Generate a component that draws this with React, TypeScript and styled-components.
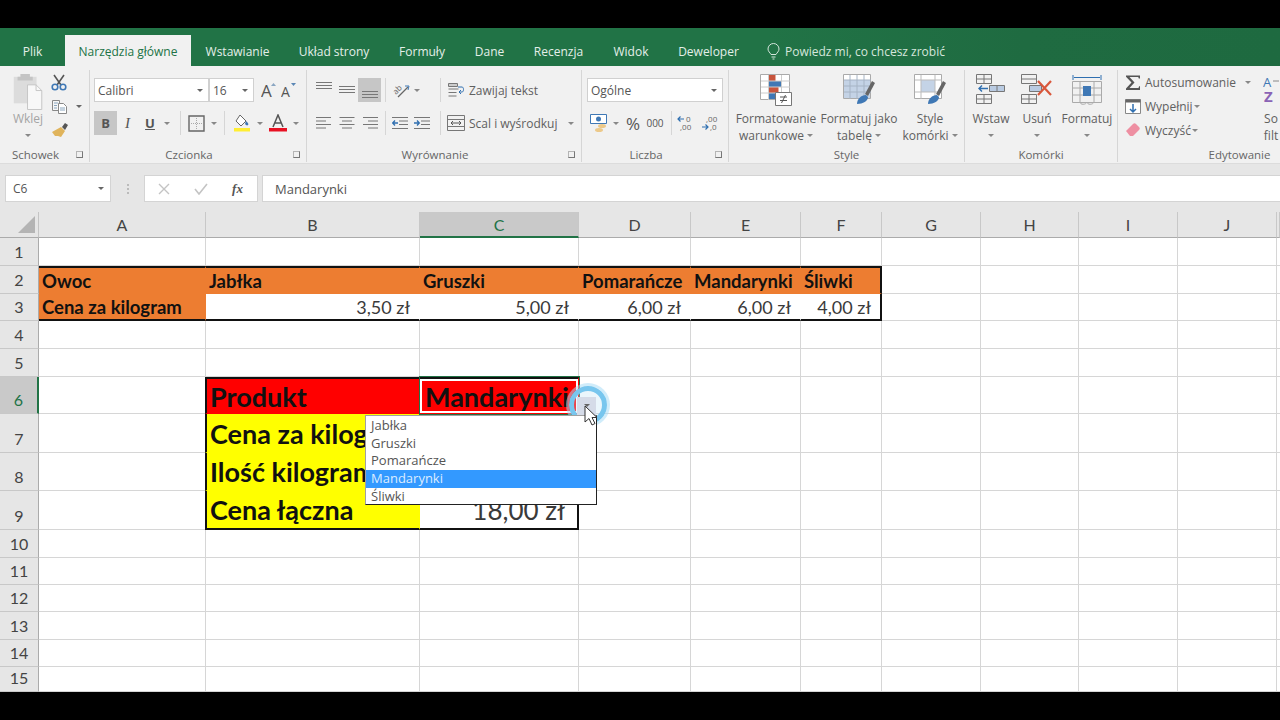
import React from 'react'
import styled, { createGlobalStyle } from 'styled-components'

const GlobalStyle = createGlobalStyle`
  html, body { margin: 0; padding: 0; background: #000; }
  body { font-family: "Open Sans", "Liberation Sans", sans-serif; }
`

const Page = styled.div`
  width: 1280px;
  height: 720px;
  background: #000;
  overflow: hidden;
  display: flex;
  flex-direction: column;
`
const BlackBar = styled.div<{ $h: number }>`
  height: ${p => p.$h}px;
  flex: none;
  background: #000;
`

/* tabs */
const TabBar = styled.div`
  height: 38px;
  flex: none;
  background: linear-gradient(90deg, #217346 0%, #217346 60%, #1f6b41 80%, #1e6a40 100%);
  display: flex;
  align-items: flex-end;
  color: #e4efe9;
  font-size: 12px;
`
const Tab = styled.div<{ $w: number; $active?: boolean }>`
  width: ${p => p.$w}px;
  height: 31px;
  display: flex;
  align-items: center;
  justify-content: center;
  padding-top: 1px;
  box-sizing: border-box;
  background: ${p => (p.$active ? '#f1f1f1' : 'transparent')};
  color: ${p => (p.$active ? '#217346' : 'inherit')};
`
const TellMe = styled.div`
  height: 31px;
  padding: 1px 0 0 14px;
  box-sizing: border-box;
  display: flex;
  align-items: center;
  gap: 5px;
  color: #d5e6dc;
  font-size: 12px;
`

/* ribbon */
const Ribbon = styled.div`
  height: 98px;
  flex: none;
  background: #f1f1f1;
  display: flex;
  overflow: hidden;
  color: #606060;
  font-size: 12px;
  border-bottom: 1px solid #dcdcdc;
  box-sizing: border-box;
`
const Group = styled.div<{ $w: number; $last?: boolean }>`
  width: ${p => p.$w}px;
  flex: none;
  height: 92px;
  margin-top: 4px;
  box-sizing: border-box;
  border-right: ${p => (p.$last ? 'none' : '1px solid #d6d6d6')};
  display: flex;
  flex-direction: column;
`
const GroupBody = styled.div`
  height: 74px;
  flex: none;
  display: flex;
`
const RowStack = styled.div<{ $left?: number }>`
  display: flex;
  flex-direction: column;
  gap: 9px;
  padding: 8px 0 0 ${p => p.$left ?? 0}px;
`
const ToolRow = styled.div`
  height: 24px;
  display: flex;
  align-items: center;
`
const GroupFoot = styled.div`
  flex: 1;
  display: flex;
  align-items: center;
  padding-top: 3px;
  color: #666;
  font-size: 11.5px;
`
const FootLabel = styled.div`
  flex: 1;
  text-align: center;
`
const Launcher = styled.div`
  width: 7px;
  height: 7px;
  margin: 0 6px 0 5px;
  border-right: 1px solid #777;
  border-bottom: 1px solid #777;
  border-left: 1px solid #b5b5b5;
  border-top: 1px solid #b5b5b5;
  box-sizing: border-box;
`
const Slot = styled.div<{ $w: number; $ml?: number; $active?: boolean }>`
  width: ${p => p.$w}px;
  margin-left: ${p => p.$ml ?? 0}px;
  height: 24px;
  flex: none;
  display: flex;
  align-items: center;
  justify-content: center;
  background: ${p => (p.$active ? '#c6c6c6' : 'transparent')};
`
const Caret = styled.span<{ $dark?: boolean }>`
  display: inline-block;
  width: 0;
  height: 0;
  border-left: 3px solid transparent;
  border-right: 3px solid transparent;
  border-top: 3px solid ${p => (p.$dark ? '#666' : '#888')};
`
const Sep = styled.div<{ $ml: number }>`
  width: 1px;
  height: 24px;
  flex: none;
  margin-left: ${p => p.$ml}px;
  background: #d6d6d6;
`
const Combo = styled.div<{ $w: number; $ml?: number }>`
  width: ${p => p.$w}px;
  margin-left: ${p => p.$ml ?? 0}px;
  height: 24px;
  flex: none;
  box-sizing: border-box;
  background: #fff;
  border: 1px solid #d0d0d0;
  display: flex;
  align-items: center;
  justify-content: space-between;
  padding: 0 5px 0 3px;
  color: #555;
  font-size: 12px;
`
const GlyphText = styled.span<{ $serif?: boolean; $bold?: boolean; $under?: boolean; $size?: number }>`
  font-family: ${p => (p.$serif ? '"Liberation Serif", serif' : '"Open Sans", sans-serif')};
  font-weight: ${p => (p.$bold ? 700 : 400)};
  font-style: ${p => (p.$serif ? 'italic' : 'normal')};
  font-size: ${p => p.$size ?? 13}px;
  color: #555;
  text-decoration: ${p => (p.$under ? 'underline' : 'none')};
`
const ToolLabel = styled.span<{ $ml?: number }>`
  margin-left: ${p => p.$ml ?? 4}px;
  white-space: nowrap;
`
const BigButton = styled.div<{ $w: number }>`
  width: ${p => p.$w}px;
  flex: none;
  display: flex;
  flex-direction: column;
  align-items: center;
  text-align: center;
  white-space: nowrap;
  line-height: 17px;
`
const BigIcon = styled.div`
  height: 41px;
  padding-top: 4px;
  box-sizing: border-box;
  display: flex;
  align-items: flex-start;
  justify-content: center;
`
const LabelLine = styled.div`
  display: flex;
  align-items: center;
  justify-content: center;
  gap: 3px;
  height: 18px;
`
const ClipColumn = styled.div`
  width: 38px;
  margin-left: 9px;
  display: flex;
  flex-direction: column;
  align-items: center;
  padding-top: 3px;
  color: #a4a4a4;
  line-height: 16px;
`
const ClipTools = styled.div`
  display: flex;
  flex-direction: column;
  gap: 6px;
  margin-left: 4px;
  padding-top: 3px;
`
const ClipTool = styled.div`
  height: 18px;
  display: flex;
  align-items: center;
  gap: 8px;
`
const EditColumn = styled.div`
  width: 136px;
  margin-left: 7px;
  display: flex;
  flex-direction: column;
  gap: 6px;
  padding-top: 3px;
`
const EditRow = styled.div`
  height: 18px;
  display: flex;
  align-items: center;
  white-space: nowrap;
`

/* formula bar */
const FormulaBar = styled.div`
  height: 48px;
  flex: none;
  box-sizing: border-box;
  background: #e6e6e6;
  padding-top: 11px;
`
const FormulaRow = styled.div`
  height: 27px;
  display: flex;
  color: #555;
  font-size: 12px;
`
const NameBox = styled.div`
  width: 106px;
  margin-left: 5px;
  box-sizing: border-box;
  background: #fff;
  border: 1px solid #d4d4d4;
  display: flex;
  align-items: center;
  justify-content: space-between;
  padding: 0 6px 0 7px;
`
const Dots = styled.div`
  width: 33px;
  display: flex;
  flex-direction: column;
  align-items: center;
  justify-content: center;
  gap: 2px;
  & > i { width: 2px; height: 2px; background: #bbb; }
`
const FxBox = styled.div`
  width: 114px;
  box-sizing: border-box;
  background: #fff;
  border: 1px solid #d4d4d4;
  display: grid;
  grid-template-columns: repeat(3, 37px);
  align-items: center;
  justify-items: center;
`
const FormulaInput = styled.div`
  flex: 1;
  margin-left: 4px;
  box-sizing: border-box;
  background: #fff;
  border: 1px solid #d4d4d4;
  border-right: none;
  display: flex;
  align-items: center;
  padding-left: 12px;
  font-size: 13px;
`

/* sheet */
const colWidths = [167, 214, 159, 112, 110, 81, 99, 98, 99, 99, 3]
const colNames = ['A', 'B', 'C', 'D', 'E', 'F', 'G', 'H', 'I', 'J', '']
const rowHeights = [28, 28, 27, 28, 28, 37, 39, 38, 39, 28, 27, 27, 28, 27, 25]

const Sheet = styled.div`
  display: grid;
  grid-template-columns: 39px ${colWidths.map(w => `${w}px`).join(' ')};
  grid-template-rows: 26px ${rowHeights.map(h => `${h}px`).join(' ')};
  background: #fff;
  flex: none;
  font-family: Lato, "Liberation Sans", sans-serif;
`
const Corner = styled.div`
  background: #e6e6e6;
  border-right: 1px solid #c4c4c4;
  border-bottom: 1px solid #ababab;
  box-sizing: border-box;
  display: flex;
  align-items: flex-end;
  justify-content: flex-end;
  padding: 0 3px 4px 0;
`
const ColHead = styled.div<{ $on?: boolean }>`
  background: ${p => (p.$on ? '#c9c9c9' : '#e6e6e6')};
  color: ${p => (p.$on ? '#217346' : '#444')};
  border-right: 1px solid #c8c8c8;
  border-bottom: ${p => (p.$on ? '2px solid #217346' : '1px solid #ababab')};
  box-sizing: border-box;
  display: flex;
  align-items: center;
  justify-content: center;
  font-size: 16px;
`
const RowHead = styled.div<{ $on?: boolean }>`
  background: ${p => (p.$on ? '#c9c9c9' : '#e6e6e6')};
  color: ${p => (p.$on ? '#217346' : '#444')};
  border-right: ${p => (p.$on ? '2px solid #217346' : '1px solid #ababab')};
  border-bottom: 1px solid #c8c8c8;
  box-sizing: border-box;
  display: flex;
  align-items: flex-end;
  justify-content: center;
  padding-bottom: 3px;
  line-height: 20px;
  font-size: 16px;
`

type CellSpec = {
  text?: string
  fill?: string
  bold?: boolean
  size?: number
  right?: number
  edges?: string
}

const Cell = styled.div<{ $fill?: string; $bold?: boolean; $size?: number; $right?: number; $edges?: string }>`
  position: relative;
  box-sizing: border-box;
  background: ${p => p.$fill ?? '#fff'};
  border-right: ${p => (p.$edges?.includes('r') ? '2px solid #111' : `1px solid ${p.$fill ?? '#d6d6d6'}`)};
  border-bottom: ${p => (p.$edges?.includes('b') ? '2px solid #111' : `1px solid ${p.$fill ?? '#d6d6d6'}`)};
  border-top: ${p => (p.$edges?.includes('t') ? '2px solid #111' : 'none')};
  border-left: ${p => (p.$edges?.includes('l') ? '2px solid #111' : 'none')};
  margin-left: ${p => (p.$edges?.includes('l') ? '-1px' : '0')};
  display: flex;
  align-items: center;
  justify-content: ${p => (p.$right ? 'flex-end' : 'flex-start')};
  padding: ${p => (p.$right ? `0 ${p.$right}px 0 0` : '0 0 0 3px')};
  white-space: nowrap;
  font-weight: ${p => (p.$bold ? 700 : 400)};
  font-size: ${p => p.$size ?? 18.5}px;
  color: ${p => (p.$bold ? '#111' : '#3a3a3a')};
`
const SelectedCell = styled(Cell)`
  z-index: 5;
  outline: 1px solid #217346;
  box-shadow: inset 0 0 0 2px #fff;
  padding-left: 5px;
`
const RingMark = styled.div`
  position: absolute;
  left: 149px;
  top: 7px;
  width: 28px;
  height: 28px;
  border-radius: 50%;
  border: 5px solid #78c6ee;
  box-shadow: 0 0 0 3px rgba(170, 220, 245, 0.55);
  background: rgba(190, 225, 245, 0.3);
  filter: blur(0.6px);
`
const DropButton = styled.div`
  position: absolute;
  left: 157px;
  top: 18px;
  width: 19px;
  height: 18px;
  background: #d5dbe8;
  display: flex;
  align-items: center;
  justify-content: center;
  padding-bottom: 2px;
  box-sizing: border-box;
`
const Pointer = styled.svg`
  position: absolute;
  left: 164px;
  top: 26px;
`
const Popup = styled.div`
  position: absolute;
  left: -55px;
  top: 36px;
  width: 232px;
  height: 90px;
  box-sizing: border-box;
  background: #fff;
  border: 1px solid #a0a0a0;
  border-right-color: #222;
  border-bottom-color: #222;
  font-family: "Open Sans", sans-serif;
  font-size: 13px;
  font-weight: 400;
  color: #555;
`
const PopupList = styled.div`
  margin-top: 1px;
`
const PopupItem = styled.div<{ $on?: boolean }>`
  height: 17.7px;
  line-height: 17.7px;
  padding-left: 5px;
  background: ${p => (p.$on ? '#3399ff' : 'transparent')};
  color: ${p => (p.$on ? '#dcecff' : 'inherit')};
`

const orange = '#ed7d31'
const cells: Record<string, CellSpec> = {
  A2: { text: 'Owoc', fill: orange, bold: true, edges: 't' },
  B2: { text: 'Jabłka', fill: orange, bold: true, edges: 't' },
  C2: { text: 'Gruszki', fill: orange, bold: true, edges: 't' },
  D2: { text: 'Pomarańcze', fill: orange, bold: true, edges: 't' },
  E2: { text: 'Mandarynki', fill: orange, bold: true, edges: 't' },
  F2: { text: 'Śliwki', fill: orange, bold: true, edges: 'tr' },
  A3: { text: 'Cena za kilogram', fill: orange, bold: true, edges: 'b' },
  B3: { text: '3,50 zł', fill: '#fff', right: 9, size: 18, edges: 'b' },
  C3: { text: '5,00 zł', fill: '#fff', right: 9, size: 18, edges: 'b' },
  D3: { text: '6,00 zł', fill: '#fff', right: 9, size: 18, edges: 'b' },
  E3: { text: '6,00 zł', fill: '#fff', right: 9, size: 18, edges: 'b' },
  F3: { text: '4,00 zł', fill: '#fff', right: 9, size: 18, edges: 'br' },
  B6: { text: 'Produkt', fill: '#ff0000', bold: true, size: 27, edges: 'tl' },
  B7: { text: 'Cena za kilogram', fill: '#ffff00', bold: true, size: 27, edges: 'l' },
  B8: { text: 'Ilość kilogramów', fill: '#ffff00', bold: true, size: 27, edges: 'l' },
  B9: { text: 'Cena łączna', fill: '#ffff00', bold: true, size: 27, edges: 'lb' },
  C7: { fill: '#fff', edges: 'r' },
  C8: { fill: '#fff', edges: 'r' },
  C9: { text: '18,00 zł', fill: '#fff', size: 26, right: 12, edges: 'rb' },
}

const popupItems = ['Jabłka', 'Gruszki', 'Pomarańcze', 'Mandarynki', 'Śliwki']

/* icons */
const Scissors = () => (
  <svg width="16" height="17" viewBox="0 0 16 17" fill="none">
    <path d="M3 1l7 10M13 1L6 11" stroke="#555" strokeWidth="1.6" />
    <circle cx="4" cy="13" r="2.8" stroke="#3f78b5" strokeWidth="1.6" />
    <circle cx="12" cy="13" r="2.8" stroke="#3f78b5" strokeWidth="1.6" />
  </svg>
)
const CopyIcon = () => (
  <svg width="17" height="15" viewBox="0 0 17 15" fill="none" stroke="#888">
    <path d="M1.5 1.5h7v10h-7z" fill="#f6f6f6" />
    <path d="M7.5 4.5h5l3 3v7h-8z" fill="#fff" />
    <path d="M3 4h4M3 6.5h3M3 9h3M9 9h5M9 11h5" stroke="#8aa6bf" />
  </svg>
)
const Painter = () => (
  <svg width="18" height="16" viewBox="0 0 18 16">
    <path d="M11 5l3-4 3 2-3 5z" fill="#555" />
    <path d="M1 10l9-5 4 4-4 6-3-1-3 0z" fill="#e0b45c" />
  </svg>
)
const PasteIcon = () => (
  <svg width="32" height="40" viewBox="0 0 32 40">
    <path d="M1 4h24v28H1z" fill="#dcdcdc" />
    <path d="M8 1h10v3h3v4H5V4h3z" fill="#c4c4c4" />
    <path d="M15.5 12.5h9l6 6v20h-15z" fill="#f8f8f8" stroke="#c4c4c4" />
    <path d="M24.5 12.5v6h6" fill="none" stroke="#c4c4c4" />
  </svg>
)
const GrowFont = ({ up }: { up: boolean }) => (
  <svg width="20" height="20" viewBox="0 0 20 20">
    <text x="0" y="17" fontFamily="Open Sans" fontSize={up ? 17 : 14} fill="#555">A</text>
    <path d={up ? 'M10 6l2.500-3 2.500 3z' : 'M10 3h5l-2.500 3z'} fill={up ? '#8aa6c2' : '#5b87b5'} />
  </svg>
)
const BorderIcon = () => (
  <svg width="17" height="17" viewBox="0 0 17 17" fill="none">
    <path d="M1 1h15v15H1z" stroke="#666" strokeWidth="1.4" />
    <path d="M8.500 3v11M3 8.500h11" stroke="#aaa" strokeDasharray="1 1" />
  </svg>
)
const FillIcon = () => (
  <svg width="18" height="18" viewBox="0 0 18 18">
    <path d="M7 1l6 6-5 5-5-5z" fill="#fff" stroke="#666" />
    <path d="M13 7c2 2 3 3 2 4s-2 0-3-1z" fill="#3f78b5" />
    <path d="M1 14h16v3.5H1z" fill="#ffee33" />
  </svg>
)
const FontColor = () => (
  <svg width="18" height="18" viewBox="0 0 18 18">
    <path d="M4 13L9 1l5 12M6 9h6" fill="none" stroke="#555" strokeWidth="1.5" />
    <path d="M0 14h18v3.5H0z" fill="#e81123" />
  </svg>
)
const AlignLines = ({ kind }: { kind: string }) => {
  const ys = kind === 'top' ? [2, 5, 8] : kind === 'mid' ? [6, 9, 12] : [11, 14, 17]
  if (kind === 'left' || kind === 'center' || kind === 'right') {
    const w = [15, 10, 15, 10]
    return (
      <svg width="16" height="14" viewBox="0 0 16 14" stroke="#777">
        {w.map((l, i) => {
          const x = kind === 'left' ? 0 : kind === 'center' ? (16 - l) / 2 : 16 - l
          return <path key={i} d={`M${x} ${1.5 + i * 3.5}h${l}`} />
        })}
      </svg>
    )
  }
  return (
    <svg width="16" height="18" viewBox="0 0 16 18" stroke="#777">
      {ys.map(y => <path key={y} d={`M0 ${y - 0.5}h16`} />)}
    </svg>
  )
}
const Orient = () => (
  <svg width="17" height="17" viewBox="0 0 17 17" fill="none">
    <text x="0" y="10" fontFamily="Open Sans" fontSize="8" fill="#666" transform="rotate(-45 5 8)">ab</text>
    <path d="M5 15L15 5" stroke="#666" strokeWidth="1.200" />
    <path d="M12 4l4 0-1 4" stroke="#3f78b5" />
  </svg>
)
const Indent = ({ dir }: { dir: 'in' | 'out' }) => (
  <svg width="16" height="14" viewBox="0 0 16 14" fill="none">
    <path d="M0 1.5h16M7 5h9M7 8.5h9M0 12.5h16" stroke="#777" />
    <path d={dir === 'out' ? 'M6 7H1m2-2.5L.7 7 3 9.5' : 'M0 7h5M3 4.5L5.3 7 3 9.5'} stroke="#2f6fb0" strokeWidth="1.3" />
  </svg>
)
const WrapIcon = () => (
  <svg width="18" height="17" viewBox="0 0 18 17" fill="none" stroke="#777">
    <path d="M1.5 1.5h9v3h-9z" fill="#ccc" />
    <path d="M1.5 7h10M1.5 10.5h8M1.5 14h8" />
    <path d="M11 5h4c2 0 2 5 0 5h-3m2-2l-2 2 2 2" stroke="#2f6fb0" />
  </svg>
)
const MergeIcon = () => (
  <svg width="18" height="18" viewBox="0 0 18 18" fill="none" stroke="#777">
    <path d="M.5 1.5h17v15H.5zM.5 5.5h17M.5 12.5h17" />
    <path d="M4 9h10M6 7L4 9l2 2M12 7l2 2-2 2" stroke="#555" />
  </svg>
)
const Currency = () => (
  <svg width="19" height="19" viewBox="0 0 19 19">
    <path d="M.5.5h16v9H.5z" fill="#fff" stroke="#3f78b5" />
    <circle cx="8.500" cy="5" r="2.500" fill="#3f78b5" />
    <ellipse cx="12" cy="12" rx="4" ry="2" fill="#ecc98a" />
    <ellipse cx="9" cy="16" rx="4" ry="2" fill="#ecc98a" />
  </svg>
)
const DecimalIcon = ({ more }: { more: boolean }) => (
  <svg width="18" height="17" viewBox="0 0 18 17">
    <path d={more ? 'M1 4h6M3.500 1.500L1 4l2.500 2.500' : 'M1 12h6M4.500 9.500L7 12l-2.500 2.500'} fill="none" stroke="#2f6fb0" strokeWidth="1.200" />
    <text x={more ? 9 : 5} y="7" fontFamily="Open Sans" fontSize="8" fill="#666">{more ? '0' : ',00'}</text>
    <text x={more ? 3 : 9} y="15" fontFamily="Open Sans" fontSize="8" fill="#666">{more ? ',00' : ',0'}</text>
  </svg>
)
const ConditionalIcon = () => (
  <svg width="32" height="32" viewBox="0 0 32 32">
    <path d="M.5.5h29v25H.5z" fill="#fff" stroke="#aaa" />
    <path d="M8.500 1h7v6h-7z" fill="#c8553d" />
    <path d="M8.500 7h13v6h-13z" fill="#3f78b5" />
    <path d="M8.500 13h10v6h-10z" fill="#c8553d" />
    <path d="M8.500 19h7v6h-7z" fill="#3f78b5" />
    <path d="M8.500 1v25M21.500 1v25M1 7h29M1 13h29M1 19h29" stroke="#ccc" fill="none" />
    <path d="M15.500 18.500h16v13h-16z" fill="#fff" stroke="#777" />
    <path d="M20 23h7M20 26.500h7M25.500 21l-4 8" stroke="#555" fill="none" />
  </svg>
)
const GridBrush = ({ full }: { full: boolean }) => (
  <svg width="32" height="32" viewBox="0 0 32 32">
    <path d="M.5.5h27v24H.5z" fill="#fff" stroke="#aaa" />
    <path d={full ? 'M1 6h26v18H1z' : 'M7 6h14v12H7z'} fill="#c4d3e6" />
    {full && <path d="M7 1v24M14 1v24M21 1v24M1 6h27M1 12h27M1 18h27" stroke="#a6b4c5" fill="none" />}
    {!full && <path d="M7 1v24M21 1v24M1 6h27M1 18h27" stroke="#bbb" fill="none" />}
    <path d="M22 20l7-13 3 2-7 13z" fill="#666" />
    <path d="M14 30c0-5 4-9 9-9l2 2c0 4-5 7-11 7z" fill="#3f78b5" />
  </svg>
)
const InsertIcon = () => (
  <svg width="30" height="30" viewBox="0 0 30 30" fill="none" stroke="#777">
    <path d="M.5.5h15v9H.5zM8 .5v9M.5 5h15" />
    <path d="M13.500 11.500h15v6h-15zM21 11.500v6" fill="#b9cbe2" />
    <path d="M12 14.500H3m3-3l-3 3 3 3" stroke="#2f6fb0" strokeWidth="1.4" />
    <path d="M.5 20.500h15v9H.5zM8 20.500v9M.5 25h15" />
  </svg>
)
const DeleteIcon = () => (
  <svg width="32" height="30" viewBox="0 0 32 30" fill="none" stroke="#777">
    <path d="M.5.5h15v9H.5zM.5 5h15" />
    <path d="M8.500 11.500h12v6h-12z" fill="#b9cbe2" />
    <path d="M.5 20.500h15v9H.5zM8 20.500v9M.5 25h15" />
    <path d="M17 7l13 14M30 7L17 21" stroke="#d9573b" strokeWidth="2.200" />
  </svg>
)
const FormatIcon = () => (
  <svg width="30" height="32" viewBox="0 0 30 32" fill="none" stroke="#aaa">
    <path d="M1 1v5M29 1v5M2 3.500h26" stroke="#2f6fb0" />
    <path d="M.5 7.500h29v21H.5zM8 7.500v21M22 7.500v21M.5 14h29M.5 21h29" />
    <path d="M11 12h8v10h-8z" fill="#3f78b5" stroke="none" />
    <path d="M8 28c0 3 6 3 7 0M15 28c0 3 6 3 7 0" />
  </svg>
)
const SigmaIcon = () => (
  <svg width="16" height="15" viewBox="0 0 16 15">
    <path d="M1 .5h14v3h-1.200l-.6-1.500H4.500l5 5.500-5 5.500h9l.6-1.700H15V15H1v-1.500L6.500 7.500 1 1.800z" fill="#555" />
  </svg>
)
const FillDown = () => (
  <svg width="16" height="15" viewBox="0 0 16 15" fill="none">
    <path d="M.5.5h15v14H.5z" stroke="#888" fill="#fff" />
    <path d="M.5.5h15v3H.5z" fill="#666" />
    <path d="M8 5v8M5 10l3 3 3-3" stroke="#2f6fb0" strokeWidth="1.5" />
  </svg>
)
const Eraser = () => (
  <svg width="16" height="14" viewBox="0 0 16 14">
    <path d="M1 8l7-7c1-1 2-1 3 0l3 3c1 1 1 2 0 3l-6 6H5z" fill="#ee8fa2" />
  </svg>
)
const SortIcon = () => (
  <svg width="16" height="30" viewBox="0 0 16 30">
    <text x="0" y="13" fontFamily="Open Sans" fontSize="13" fill="#3f78b5">A</text>
    <path d="M10 7h6" stroke="#888" />
    <text x="1" y="28" fontFamily="Open Sans" fontWeight="700" fontSize="15" fill="#8a63b5">Z</text>
  </svg>
)
const Bulb = () => (
  <svg width="13" height="17" viewBox="0 0 13 17" fill="none" stroke="#d5e6dc">
    <path d="M4 11.500C3 9.500 1 8.500 1 6a5.500 5.500 0 0 1 11 0c0 2.500-2 3.500-3 5.500z" />
    <path d="M4.500 14h4M5.500 16h2" />
  </svg>
)

const CaretLabel = ({ children }: { children?: React.ReactNode }) => (
  <LabelLine>{children}<Caret /></LabelLine>
)

const Clipboard = () => (
  <Group $w={90}>
    <GroupBody>
      <ClipColumn>
        <PasteIcon />
        <span>Wklej</span>
        <LabelLine><Caret /></LabelLine>
      </ClipColumn>
      <ClipTools>
        <ClipTool><Scissors /></ClipTool>
        <ClipTool><CopyIcon /><Caret $dark /></ClipTool>
        <ClipTool><Painter /></ClipTool>
      </ClipTools>
    </GroupBody>
    <GroupFoot><FootLabel>Schowek</FootLabel><Launcher /></GroupFoot>
  </Group>
)

const FontGroup = () => (
  <Group $w={217}>
    <GroupBody>
      <RowStack $left={4}>
        <ToolRow>
          <Combo $w={115}>Calibri<Caret $dark /></Combo>
          <Combo $w={45}>16<Caret $dark /></Combo>
          <Slot $w={20} $ml={7}><GrowFont up /></Slot>
          <Slot $w={20}><GrowFont up={false} /></Slot>
        </ToolRow>
        <ToolRow>
          <Slot $w={23} $active><GlyphText $bold>B</GlyphText></Slot>
          <Slot $w={21}><GlyphText $serif $size={15}>I</GlyphText></Slot>
          <Slot $w={24}><GlyphText $bold $under>U</GlyphText></Slot>
          <Slot $w={10}><Caret /></Slot>
          <Sep $ml={8} />
          <Slot $w={31}><BorderIcon /></Slot>
          <Slot $w={4}><Caret /></Slot>
          <Sep $ml={8} />
          <Slot $w={33}><FillIcon /></Slot>
          <Slot $w={4}><Caret /></Slot>
          <Slot $w={32}><FontColor /></Slot>
          <Slot $w={4}><Caret /></Slot>
        </ToolRow>
      </RowStack>
    </GroupBody>
    <GroupFoot><FootLabel>Czcionka</FootLabel><Launcher /></GroupFoot>
  </Group>
)

const AlignGroup = () => (
  <Group $w={275}>
    <GroupBody>
      <RowStack $left={5}>
        <ToolRow>
          <Slot $w={23}><AlignLines kind="top" /></Slot>
          <Slot $w={23}><AlignLines kind="mid" /></Slot>
          <Slot $w={23} $active><AlignLines kind="bottom" /></Slot>
          <Sep $ml={4} />
          <Slot $w={18} $ml={6}><Orient /></Slot>
          <Slot $w={14}><Caret /></Slot>
          <Sep $ml={16} />
          <Slot $w={18} $ml={6}><WrapIcon /></Slot>
          <ToolLabel>Zawijaj tekst</ToolLabel>
        </ToolRow>
        <ToolRow>
          <Slot $w={23}><AlignLines kind="left" /></Slot>
          <Slot $w={23}><AlignLines kind="center" /></Slot>
          <Slot $w={23}><AlignLines kind="right" /></Slot>
          <Sep $ml={4} />
          <Slot $w={22} $ml={3}><Indent dir="out" /></Slot>
          <Slot $w={22}><Indent dir="in" /></Slot>
          <Sep $ml={7} />
          <Slot $w={18} $ml={6}><MergeIcon /></Slot>
          <ToolLabel>Scal i wyśrodkuj</ToolLabel>
          <Slot $w={10} $ml={9}><Caret /></Slot>
        </ToolRow>
      </RowStack>
    </GroupBody>
    <GroupFoot><FootLabel>Wyrównanie</FootLabel><Launcher /></GroupFoot>
  </Group>
)

const NumberGroup = () => (
  <Group $w={147}>
    <GroupBody>
      <RowStack $left={5}>
        <ToolRow><Combo $w={136}>Ogólne<Caret $dark /></Combo></ToolRow>
        <ToolRow>
          <Slot $w={20} $ml={2}><Currency /></Slot>
          <Slot $w={14}><Caret /></Slot>
          <Slot $w={20}><GlyphText $size={17}>%</GlyphText></Slot>
          <Slot $w={24}><GlyphText $size={10}>000</GlyphText></Slot>
          <Sep $ml={4} />
          <Slot $w={20} $ml={4}><DecimalIcon more /></Slot>
          <Slot $w={22} $ml={3}><DecimalIcon more={false} /></Slot>
        </ToolRow>
      </RowStack>
    </GroupBody>
    <GroupFoot><FootLabel>Liczba</FootLabel><Launcher /></GroupFoot>
  </Group>
)

const StyleGroup = () => (
  <Group $w={236}>
    <GroupBody>
      <BigButton $w={94}>
        <BigIcon><ConditionalIcon /></BigIcon>
        <div>Formatowanie</div>
        <CaretLabel>warunkowe</CaretLabel>
      </BigButton>
      <BigButton $w={72}>
        <BigIcon><GridBrush full /></BigIcon>
        <div>Formatuj jako</div>
        <CaretLabel>tabelę</CaretLabel>
      </BigButton>
      <BigButton $w={70}>
        <BigIcon><GridBrush full={false} /></BigIcon>
        <div>Style</div>
        <CaretLabel>komórki</CaretLabel>
      </BigButton>
    </GroupBody>
    <GroupFoot><FootLabel>Style</FootLabel></GroupFoot>
  </Group>
)

const CellsGroup = () => (
  <Group $w={153}>
    <GroupBody>
      <BigButton $w={52}>
        <BigIcon><InsertIcon /></BigIcon>
        <div>Wstaw</div>
        <CaretLabel />
      </BigButton>
      <BigButton $w={40}>
        <BigIcon><DeleteIcon /></BigIcon>
        <div>Usuń</div>
        <CaretLabel />
      </BigButton>
      <BigButton $w={60}>
        <BigIcon><FormatIcon /></BigIcon>
        <div>Formatuj</div>
        <CaretLabel />
      </BigButton>
    </GroupBody>
    <GroupFoot><FootLabel>Komórki</FootLabel></GroupFoot>
  </Group>
)

const EditGroup = () => (
  <Group $w={243} $last>
    <GroupBody>
      <EditColumn>
        <EditRow><SigmaIcon /><ToolLabel>Autosumowanie</ToolLabel><Slot $w={8} $ml={8}><Caret /></Slot></EditRow>
        <EditRow><FillDown /><ToolLabel>Wypełnij</ToolLabel><Slot $w={8}><Caret /></Slot></EditRow>
        <EditRow><Eraser /><ToolLabel>Wyczyść</ToolLabel><Slot $w={8}><Caret /></Slot></EditRow>
      </EditColumn>
      <BigButton $w={20}>
        <BigIcon><SortIcon /></BigIcon>
        <div>So</div>
        <div>filt</div>
      </BigButton>
    </GroupBody>
    <GroupFoot><FootLabel>Edytowanie</FootLabel></GroupFoot>
  </Group>
)

const X = () => (
  <svg width="12" height="12" viewBox="0 0 12 12"><path d="M1 1l10 10M11 1L1 11" stroke="#c4c4c4" strokeWidth="1.4" /></svg>
)
const Check = () => (
  <svg width="14" height="12" viewBox="0 0 14 12" fill="none"><path d="M1 6l4 5 8-10" stroke="#c4c4c4" strokeWidth="1.6" /></svg>
)

const C6 = () => (
  <SelectedCell $fill="#ff0000" $bold $size={27} $edges="t">
    Mandarynki
    <RingMark />
    <DropButton><Caret $dark /></DropButton>
    <Popup>
      <PopupList>
        {popupItems.map(item => (
          <PopupItem key={item} $on={item === 'Mandarynki'}>{item}</PopupItem>
        ))}
      </PopupList>
    </Popup>
    <Pointer width="14" height="22" viewBox="0 0 14 22">
      <path d="M1 1v16l4-3.500 3 6.500 3-1.500-3-6h5z" fill="#fff" stroke="#333" />
    </Pointer>
  </SelectedCell>
)

export default function App() {
  return (
    <Page>
      <GlobalStyle />
      <BlackBar $h={28} />
      <TabBar>
        <Tab $w={65}>Plik</Tab>
        <Tab $w={126} $active>Narzędzia główne</Tab>
        <Tab $w={93}>Wstawianie</Tab>
        <Tab $w={100}>Układ strony</Tab>
        <Tab $w={76}>Formuły</Tab>
        <Tab $w={59}>Dane</Tab>
        <Tab $w={79}>Recenzja</Tab>
        <Tab $w={66}>Widok</Tab>
        <Tab $w={89}>Deweloper</Tab>
        <TellMe><Bulb />Powiedz mi, co chcesz zrobić</TellMe>
      </TabBar>
      <Ribbon>
        <Clipboard />
        <FontGroup />
        <AlignGroup />
        <NumberGroup />
        <StyleGroup />
        <CellsGroup />
        <EditGroup />
      </Ribbon>
      <FormulaBar>
        <FormulaRow>
          <NameBox>C6<Caret $dark /></NameBox>
          <Dots><i /><i /><i /></Dots>
          <FxBox>
            <X />
            <Check />
            <GlyphText $serif $bold $size={13}>fx</GlyphText>
          </FxBox>
          <FormulaInput>Mandarynki</FormulaInput>
        </FormulaRow>
      </FormulaBar>
      <Sheet>
        <Corner>
          <svg width="17" height="17" viewBox="0 0 17 17"><path d="M17 0v17H0z" fill="#b4b4b4" /></svg>
        </Corner>
        {colNames.map((c, i) => (
          <ColHead key={i} $on={c === 'C'}>{c}</ColHead>
        ))}
        {rowHeights.map((_, r) => (
          <React.Fragment key={r}>
            <RowHead $on={r === 5}>{r + 1}</RowHead>
            {colNames.map((c, i) => {
              const id = `${c}${r + 1}`
              if (id === 'C6') return <C6 key={id} />
              const s = cells[id]
              return (
                <Cell key={id + i} $fill={s?.fill} $bold={s?.bold} $size={s?.size} $right={s?.right} $edges={s?.edges}>
                  {s?.text}
                </Cell>
              )
            })}
          </React.Fragment>
        ))}
      </Sheet>
      <BlackBar $h={28} />
    </Page>
  )
}
